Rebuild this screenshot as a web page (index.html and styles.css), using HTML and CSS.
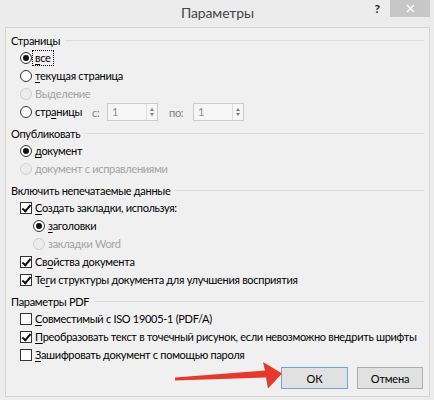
FILE: index.html
```html
<!DOCTYPE html>
<html lang="ru">
<head>
<meta charset="utf-8">
<title>Параметры</title>
<link rel="stylesheet" href="styles.css">
</head>
<body>
<div class="dialog">
  <div class="titlebar">
    <div></div>
    <div class="title">Параметры</div>
    <div class="tb-right">
      <span class="help">?</span>
      <span class="close"><svg width="9" height="9" viewBox="0 0 9 9"><path d="M1 1L8 8M8 1L1 8" stroke="#fff" stroke-width="1.3"/></svg></span>
    </div>
  </div>
  <div class="panel">
    <section class="group first">
      <div class="heading">Страницы</div>
      <div class="row"><span class="radio checked"></span><span class="label focus"><u>в</u>се</span></div>
      <div class="row"><span class="radio"></span><span class="label"><u>т</u>екущая страница</span></div>
      <div class="row disabled"><span class="radio"></span><span class="label">Выделение</span></div>
      <div class="row">
        <span class="pages"><span class="radio"></span><span class="label">стр<u>а</u>ницы</span></span>
        <span class="spinlabel from">с:</span>
        <span class="spin"><span class="val">1</span><span class="arrows"><span class="up"></span><span class="down"></span></span></span>
        <span class="spinlabel to">по:</span>
        <span class="spin"><span class="val">1</span><span class="arrows"><span class="up"></span><span class="down"></span></span></span>
      </div>
    </section>
    <section class="group">
      <div class="heading">Опубликовать</div>
      <div class="row"><span class="radio checked"></span><span class="label"><u>д</u>окумент</span></div>
      <div class="row disabled"><span class="radio"></span><span class="label">документ с исправлениями</span></div>
    </section>
    <section class="group">
      <div class="heading">Включить непечатаемые данные</div>
      <div class="row"><span class="check checked"></span><span class="label"><u>С</u>оздать закладки, используя:</span></div>
      <div class="row nested"><span class="radio checked"></span><span class="label"><u>з</u>аголовки</span></div>
      <div class="row nested disabled"><span class="radio"></span><span class="label">закладки Word</span></div>
      <div class="row"><span class="check checked"></span><span class="label">Св<u>о</u>йства документа</span></div>
      <div class="row"><span class="check checked"></span><span class="label">Те<u>г</u>и структуры документа для улучшения восприятия</span></div>
    </section>
    <section class="group">
      <div class="heading">Параметры PDF</div>
      <div class="row"><span class="check"></span><span class="label"><u>С</u>овместимый с ISO 19005-1 (PDF/A)</span></div>
      <div class="row"><span class="check checked"></span><span class="label"><u>П</u>реобразовать текст в точечный рисунок, если невозможно внедрить шрифты</span></div>
      <div class="row"><span class="check"></span><span class="label"><u>З</u>ашифровать документ с помощью пароля</span></div>
    </section>
    <div class="buttons">
      <button class="btn default">ОК</button>
      <button class="btn">Отмена</button>
    </div>
  </div>
  <svg class="arrow" viewBox="170 355 115 40" width="115" height="40">
    <polygon points="175,377.6 265,370.5 263,362 282,373.5 268,388.5 266,377.5 175,380.4" fill="#e5392c"/>
  </svg>
</div>
</body>
</html>
```
FILE: styles.css
```css
html, body {
  margin: 0;
  padding: 0;
}
body {
  background: #ececec;
  font-family: "Lato", "Open Sans", sans-serif;
  font-size: 11px;
  letter-spacing: -0.3px;
  color: #000;
}
.dialog {
  position: relative;
  width: 434px;
  height: 400px;
  box-sizing: border-box;
  padding: 0 4px 0 5px;
  display: flex;
  flex-direction: column;
}
.titlebar {
  height: 27px;
  flex: none;
  display: grid;
  grid-template-columns: 1fr auto 1fr;
  align-items: start;
}
.title {
  font-size: 14px;
  letter-spacing: -0.1px;
  line-height: 26px;
  color: #444;
}
.tb-right {
  justify-self: end;
  display: flex;
  align-items: flex-start;
}
.help {
  font-weight: bold;
  font-size: 12px;
  letter-spacing: 0;
  line-height: 16px;
  margin-top: 1px;
  margin-right: 10px;
  color: #222;
}
.close {
  width: 40px;
  height: 17px;
  background: #c7c7c7;
  display: flex;
  align-items: center;
  justify-content: center;
}
.panel {
  flex: 1;
  border: 1px solid #d6d6d6;
  margin-bottom: 3px;
  padding: 3px 5px 0 5px;
  background: #f0f0f0;
  display: flex;
  flex-direction: column;
}
.group {
  margin-top: 3px;
}
.group.first {
  margin-top: 0;
}
.heading {
  display: flex;
  align-items: center;
  height: 18px;
  white-space: nowrap;
}
.heading::after {
  content: "";
  flex: 1;
  border-top: 1px solid #dcdcdc;
  margin-left: 5px;
}
.row {
  display: flex;
  align-items: center;
  height: 18px;
  margin-left: 9px;
  white-space: nowrap;
}
.row.nested {
  margin-left: 22px;
}
.label {
  margin-left: 3px;
  line-height: 14px;
}
.label u {
  text-underline-offset: 2px;
}
.focus {
  outline: 1px dotted #000;
  outline-offset: 0;
  padding: 0 2px;
  margin-left: 1px;
}
.row.disabled .label {
  color: #a2a2a2;
}
.radio {
  width: 12px;
  height: 12px;
  box-sizing: border-box;
  border: 1px solid #333;
  border-radius: 50%;
  background: #fff;
  flex: none;
  display: flex;
  align-items: center;
  justify-content: center;
}
.radio.checked::after {
  content: "";
  width: 6px;
  height: 6px;
  border-radius: 50%;
  background: #111;
}
.row.disabled .radio {
  border-color: #cfcfcf;
  background: #ececec;
}
.check {
  width: 12px;
  height: 12px;
  box-sizing: border-box;
  border: 1px solid #333;
  background: #fff;
  flex: none;
  position: relative;
}
.check.checked::after {
  content: "";
  position: absolute;
  left: 3px;
  top: 0px;
  width: 3px;
  height: 7px;
  border-right: 2px solid #111;
  border-bottom: 2px solid #111;
  transform: rotate(40deg);
}
.pages {
  display: flex;
  align-items: center;
  width: 72px;
}
.spinlabel {
  color: #7d7d7d;
}
.spinlabel.from {
  width: 15px;
}
.spinlabel.to {
  width: 24px;
  margin-left: 11px;
}
.spin {
  width: 51px;
  height: 18px;
  box-sizing: border-box;
  border: 1px solid #cbcbcb;
  background: #f6f6f6;
  display: flex;
}
.val {
  flex: 1;
  color: #8a8a8a;
  padding-left: 4px;
  line-height: 16px;
}
.arrows {
  width: 11px;
  border-left: 1px solid #dedede;
  display: flex;
  flex-direction: column;
  align-items: center;
  justify-content: space-around;
  padding: 3px 0;
  box-sizing: border-box;
}
.up, .down {
  width: 0;
  height: 0;
  border-left: 2.5px solid transparent;
  border-right: 2.5px solid transparent;
}
.up {
  border-bottom: 3px solid #7a7a7a;
}
.down {
  border-top: 3px solid #7a7a7a;
}
.buttons {
  display: flex;
  justify-content: flex-end;
  gap: 9px;
  margin-top: 3px;
  margin-right: 1px;
}
.btn {
  width: 67px;
  height: 22px;
  box-sizing: border-box;
  border: 1px solid #adadad;
  background: #e1e1e1;
  font-family: inherit;
  font-size: 11px;
  letter-spacing: -0.2px;
  color: #000;
  padding: 0;
}
.btn + .btn {
  width: 66px;
}
.btn.default {
  border-color: #6aa5e0;
}
.arrow {
  position: absolute;
  left: 170px;
  top: 355px;
  pointer-events: none;
}
```
